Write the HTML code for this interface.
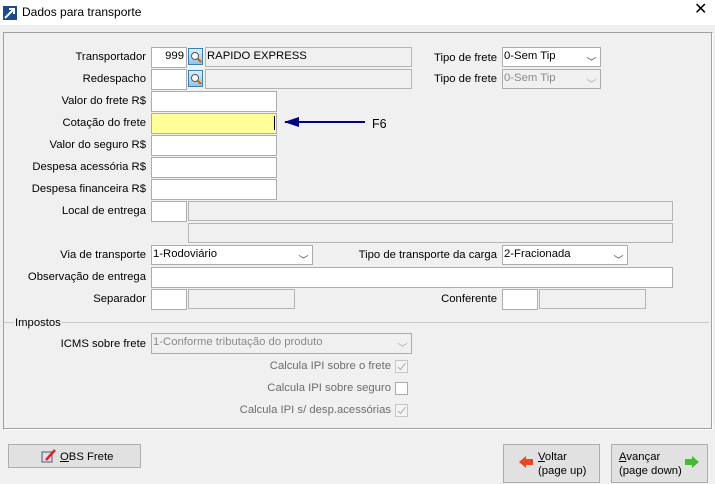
<!DOCTYPE html>
<html><head><meta charset="utf-8"><style>
*{box-sizing:border-box;margin:0;padding:0}
body{width:715px;height:484px;background:#f0f0f0;font-family:"Liberation Sans",sans-serif;font-size:11.3px;color:#000;position:relative;overflow:hidden}
.a{position:absolute}
.t{position:absolute;white-space:nowrap;line-height:14px}
.r{text-align:right}
.i{position:absolute;background:#fff;border:1px solid #abadb3;height:21px}
.g{position:absolute;background:#f0f0f0;border:1px solid #b4b4b4;height:20px}
.sel{position:absolute;background:#fff;border:1px solid #abadb3;height:20px;padding:1px 0 0 1px;line-height:15px}
.sel.d{background:#f0f0f0;color:#8a8a8a}
.chev{position:absolute;right:5px;top:6px;width:7px;height:7px;border-right:1px solid #555;border-bottom:1px solid #555;transform:scale(1,.6) rotate(45deg)}
.d .chev{border-color:#aaa}
.cb{position:absolute;width:13px;height:13px;border:1px solid #c6c6c6;background:#f4f4f4}
.btn{position:absolute;background:#e1e1e1;border:1px solid #adadad}
.srch{position:absolute;width:15px;height:17px;border:1px solid #3c7fb1;background:linear-gradient(#dbeeff,#8ec5f0);}
</style></head><body>
<div class="a" style="left:0;top:0;width:715px;height:25px;background:#fff"></div>
<svg class="a" style="left:3px;top:6px" width="14" height="14"><rect width="14" height="14" fill="#1c4a8c"/><path d="M2 12 L11 3 M6 3 H11 V8" stroke="#fff" stroke-width="2" fill="none"/></svg>
<div class="t" style="left:22px;top:5px;font-size:12px">Dados para transporte</div>
<div class="t" style="left:694px;top:3px;font-size:16px">✕</div>

<div class="a" style="left:3px;top:32px;width:710px;height:398px;border:1px solid #a0a0a0;border-right-color:#fff;border-bottom-color:#fff;box-shadow:inset -1px -1px #a0a0a0"></div>

<div class="t r" style="right:569px;top:50px">Transportador</div>
<div class="i" style="left:151px;top:47px;width:36px;text-align:right;padding:2px 2px 0 0">999</div>
<div class="srch" style="left:188px;top:48px"><svg width="13" height="15"><circle cx="6" cy="7" r="3.5" fill="#fff" stroke="#555"/><path d="M8.5 9.5 L12 13" stroke="#b60" stroke-width="2"/></svg></div>
<div class="g" style="left:205px;top:47px;width:207px;padding:2px 0 0 1px">RAPIDO EXPRESS</div>
<div class="t r" style="right:569px;top:72px">Redespacho</div>
<div class="i" style="left:151px;top:69px;width:36px"></div>
<div class="srch" style="left:188px;top:70px"><svg width="13" height="15"><circle cx="6" cy="7" r="3.5" fill="#fff" stroke="#555"/><path d="M8.5 9.5 L12 13" stroke="#b60" stroke-width="2"/></svg></div>
<div class="g" style="left:205px;top:69px;width:207px"></div>

<div class="t r" style="right:218px;top:51px">Tipo de frete</div>
<div class="sel" style="left:502px;top:47px;width:99px">0-Sem Tip<div class="chev"></div></div>
<div class="t r" style="right:218px;top:72px">Tipo de frete</div>
<div class="sel d" style="left:502px;top:69px;width:99px">0-Sem Tip<div class="chev"></div></div>

<div class="t r" style="right:569px;top:94px">Valor do frete R$</div>
<div class="i" style="left:151px;top:91px;width:126px"></div>
<div class="t r" style="right:569px;top:116px">Cotação do frete</div>
<div class="i" style="left:151px;top:113px;width:126px;background:#ffff99"></div>
<div class="a" style="left:274px;top:116px;width:1px;height:14px;background:#000"></div>
<svg class="a" style="left:283px;top:116px" width="85" height="12"><path d="M2 6 H82" stroke="#000080" stroke-width="2"/><path d="M1 6 L16 1 L16 11 Z" fill="#000080"/></svg>
<div class="t" style="left:372px;top:117px;font-size:12.5px">F6</div>
<div class="t r" style="right:569px;top:138px">Valor do seguro R$</div>
<div class="i" style="left:151px;top:135px;width:126px"></div>
<div class="t r" style="right:569px;top:160px">Despesa acessória R$</div>
<div class="i" style="left:151px;top:157px;width:126px"></div>
<div class="t r" style="right:569px;top:182px">Despesa financeira R$</div>
<div class="i" style="left:151px;top:179px;width:126px"></div>

<div class="t r" style="right:569px;top:204px">Local de entrega</div>
<div class="i" style="left:151px;top:201px;width:36px"></div>
<div class="g" style="left:188px;top:201px;width:485px"></div>
<div class="g" style="left:188px;top:223px;width:485px"></div>

<div class="t r" style="right:569px;top:248px">Via de transporte</div>
<div class="sel" style="left:151px;top:245px;width:162px">1-Rodoviário<div class="chev"></div></div>
<div class="t r" style="right:218px;top:248px">Tipo de transporte da carga</div>
<div class="sel" style="left:502px;top:245px;width:126px">2-Fracionada<div class="chev"></div></div>

<div class="t r" style="right:569px;top:270px">Observação de entrega</div>
<div class="i" style="left:151px;top:267px;width:522px"></div>
<div class="t r" style="right:569px;top:292px">Separador</div>
<div class="i" style="left:151px;top:289px;width:36px"></div>
<div class="g" style="left:188px;top:289px;width:107px"></div>
<div class="t r" style="right:218px;top:292px">Conferente</div>
<div class="i" style="left:502px;top:289px;width:36px"></div>
<div class="g" style="left:539px;top:289px;width:107px"></div>

<div class="a" style="left:4px;top:322px;width:705px;height:1px;background:#c8c8c8"></div>
<div class="t" style="left:14px;top:316px;background:#f0f0f0;padding:0 1px">Impostos</div>
<div class="t r" style="right:569px;top:337px">ICMS sobre frete</div>
<div class="sel d" style="left:151px;top:333px;width:261px;height:21px">1-Conforme tributação do produto<div class="chev"></div></div>
<div class="t r" style="right:324px;top:359px;color:#6d6d6d">Calcula IPI sobre o frete</div>
<div class="cb" style="left:395px;top:360px"><svg width="11" height="11"><path d="M2 6 L4.5 8.5 L9.5 2" stroke="#aaa" fill="none"/></svg></div>
<div class="t r" style="right:324px;top:381px;color:#6d6d6d">Calcula IPI sobre seguro</div>
<div class="cb" style="left:395px;top:382px;background:#fff;border-color:#aaa"></div>
<div class="t r" style="right:324px;top:403px;color:#6d6d6d">Calcula IPI s/ desp.acessórias</div>
<div class="cb" style="left:395px;top:404px"><svg width="11" height="11"><path d="M2 6 L4.5 8.5 L9.5 2" stroke="#aaa" fill="none"/></svg></div>

<div class="btn" style="left:8px;top:444px;width:133px;height:24px"></div>
<svg class="a" style="left:41px;top:449px" width="15" height="14"><rect x="1" y="3" width="10" height="10" fill="#dde" stroke="#557"/><path d="M5 11 L14 1" stroke="#d22" stroke-width="2.5"/></svg>
<div class="t" style="left:60px;top:450px"><u>O</u>BS Frete</div>

<div class="btn" style="left:503px;top:444px;width:97px;height:39px"></div>
<div class="a" style="left:519px;top:456px;width:0;height:0;border:6px solid transparent;border-right:7px solid #e42;border-left:0"></div>
<div class="a" style="left:525px;top:459px;width:8px;height:6px;background:#e42"></div>
<div class="t" style="left:538px;top:450px"><u>V</u>oltar<br>(page up)</div>
<div class="btn" style="left:611px;top:444px;width:97px;height:39px"></div>
<div class="a" style="left:685px;top:459px;width:8px;height:6px;background:#4b3"></div>
<div class="a" style="left:692px;top:456px;width:0;height:0;border:6px solid transparent;border-left:7px solid #4b3;border-right:0"></div>
<div class="t" style="left:619px;top:450px"><u>A</u>vançar<br>(page down)</div>
</body></html>
